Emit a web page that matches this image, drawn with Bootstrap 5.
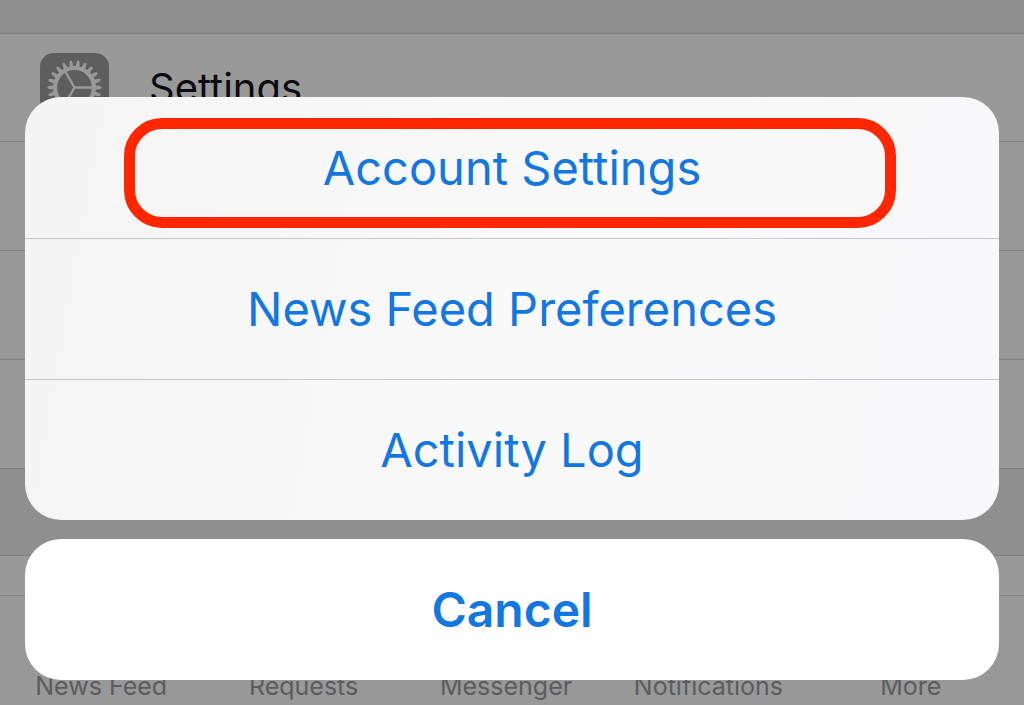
<!DOCTYPE html>
<html lang="en">
<head>
<meta charset="utf-8">
<meta name="viewport" content="width=device-width, initial-scale=1">
<title>Settings</title>
<link href="https://cdn.jsdelivr.net/npm/bootstrap@5.3.0/dist/css/bootstrap.min.css" rel="stylesheet">
<style>
body{font-family:Inter,"Liberation Sans",sans-serif;background:#8f8f8f;color:#0b0b12}
.screen{height:100vh}
.top-band{height:34px;border-bottom:1px solid #7f7f80}
.menu-row{height:109px;background:#999;border-bottom:1px solid #7f7f80;padding:0 40px}
.menu-row.first{height:108px}
.menu-label{font-size:40px;line-height:48px;margin-left:40px}
.gap-band{height:86px}
.row-last{height:40px;background:#999;border-top:1px solid #7f7f80}
.tabs{background:#989898;border-top:1px solid #868686;padding:76px 12px 8px 0;font-size:25px;line-height:28px}
.tab-link{flex:1 1 0;color:#5c5c5f;text-align:center;text-decoration:none;white-space:nowrap}
.sheet{padding:0 25px 25px}
.panel{border-radius:36px;background:linear-gradient(100deg,#f4f4f5,#f9f9fa 50%,#f8f8fa)}
.action{height:141px;border:0;background:transparent;color:#1277e1;font-size:47px;line-height:56px}
.action+.action{border-top:1px solid #c6c6cc}
.cancel{background:#fff;border-radius:36px;font-size:48px;font-weight:600;margin-top:19px}
.ring{left:99px;right:103px;top:21px;height:110px;border:11px solid #ff2600;border-radius:38px;pointer-events:none}
</style>
</head>
<body>
<div class="screen position-relative overflow-hidden">
  <main>
    <div class="top-band"></div>
    <div class="menu-row first d-flex align-items-center">
      <svg width="69" height="69" viewBox="0 0 69 69" aria-hidden="true">
        <defs>
          <path id="teeth" d="M20 -2.2L26.6 -1.2Q27.8 0 26.6 1.2L20 2.2ZM-20 -2.2L-26.6 -1.2Q-27.8 0 -26.6 1.2L-20 2.2Z"/>
        </defs>
        <rect width="69" height="69" rx="14" fill="#5e5e5e"/>
        <g transform="translate(34.5 34.5)" fill="#999" stroke="none">
          <use href="#teeth"/>
          <use href="#teeth" transform="rotate(16.364)"/>
          <use href="#teeth" transform="rotate(32.727)"/>
          <use href="#teeth" transform="rotate(49.091)"/>
          <use href="#teeth" transform="rotate(65.455)"/>
          <use href="#teeth" transform="rotate(81.818)"/>
          <use href="#teeth" transform="rotate(98.182)"/>
          <use href="#teeth" transform="rotate(114.545)"/>
          <use href="#teeth" transform="rotate(130.909)"/>
          <use href="#teeth" transform="rotate(147.273)"/>
          <use href="#teeth" transform="rotate(163.636)"/>
          <circle r="19.4" fill="none" stroke="#999" stroke-width="4"/>
          <path d="M0 0H19M0 0L-9.5 -16.5M0 0L-9.5 16.5" stroke="#999" stroke-width="2.4"/>
        </g>
      </svg>
      <span class="menu-label">Settings</span>
    </div>
    <div class="menu-row"></div>
    <div class="menu-row"></div>
    <div class="menu-row"></div>
    <div class="gap-band"></div>
    <div class="row-last"></div>
  </main>
  <nav class="tabs d-flex">
    <a class="tab-link" href="#">News Feed</a>
    <a class="tab-link" href="#">Requests</a>
    <a class="tab-link" href="#">Messenger</a>
    <a class="tab-link" href="#">Notifications</a>
    <a class="tab-link" href="#">More</a>
  </nav>
  <div class="sheet position-absolute bottom-0 start-0 w-100">
    <div class="panel position-relative overflow-hidden">
      <button type="button" class="action d-block w-100">Account Settings</button>
      <button type="button" class="action d-block w-100">News Feed Preferences</button>
      <button type="button" class="action d-block w-100">Activity Log</button>
      <div class="ring position-absolute"></div>
    </div>
    <button type="button" class="action cancel d-block w-100">Cancel</button>
  </div>
</div>
<script src="https://cdn.jsdelivr.net/npm/bootstrap@5.3.0/dist/js/bootstrap.bundle.min.js"></script>
</body>
</html>
